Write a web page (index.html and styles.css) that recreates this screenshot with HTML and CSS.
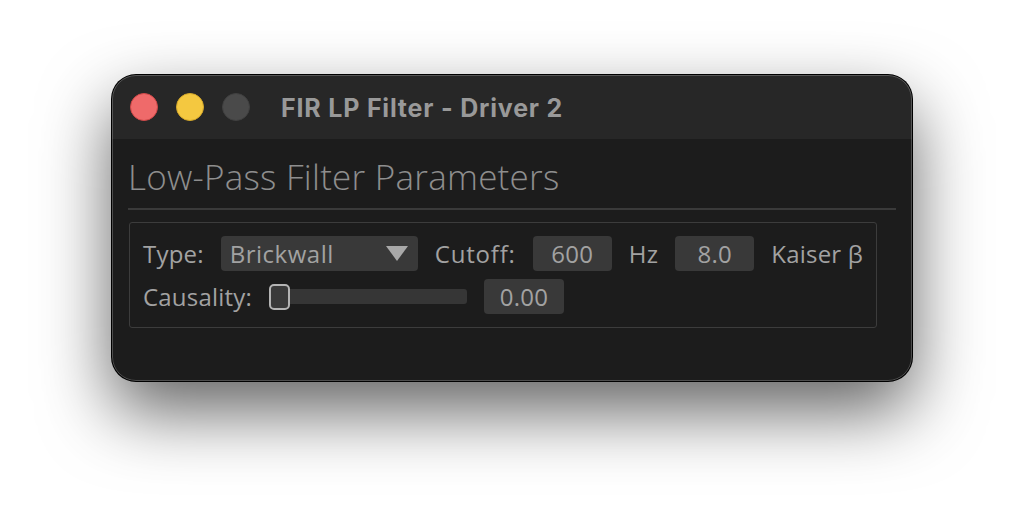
FILE: index.html
```html
<!DOCTYPE html>
<html>
<head>
<meta charset="utf-8">
<link rel="stylesheet" href="styles.css">
</head>
<body>
<div class="window">
  <div class="titlebar">
    <div class="lights">
      <span class="light red"></span>
      <span class="light yellow"></span>
      <span class="light gray"></span>
    </div>
    <div class="title">FIR LP Filter - Driver 2</div>
  </div>
  <div class="content">
    <h1 class="heading">Low-Pass Filter Parameters</h1>
    <div class="sep"></div>
    <div class="group">
      <div class="row">
        <span class="label">Type:</span>
        <div class="combo"><span>Brickwall</span><span class="arrow"></span></div>
        <span class="label cutoff">Cutoff:</span>
        <div class="field">600</div>
        <span class="label">Hz</span>
        <div class="field">8.0</div>
        <span class="label">Kaiser β</span>
      </div>
      <div class="row">
        <span class="label">Causality:</span>
        <div class="slider"><span class="thumb"></span></div>
        <div class="field">0.00</div>
      </div>
    </div>
  </div>
</div>
</body>
</html>
```
FILE: styles.css
```css
html, body {
  margin: 0;
  padding: 0;
  background: #ffffff;
}
body {
  width: 1024px;
  height: 528px;
  overflow: hidden;
  padding: 75px 0 0 112px;
  box-sizing: border-box;
}
.window {
  position: relative;
  width: 800px;
  height: 306px;
  border-radius: 24px;
  background: #1c1c1c;
  overflow: hidden;
  box-shadow: 0 30px 70px rgba(0,0,0,0.62), 0 0 0 1px #000;
}
.window::after {
  content: "";
  position: absolute;
  inset: 0;
  border-radius: 24px;
  border: 1px solid rgba(255,255,255,0.22);
  pointer-events: none;
}
.titlebar {
  height: 64px;
  background: #272727;
  display: flex;
  align-items: center;
  padding-left: 18px;
}
.lights {
  display: flex;
  gap: 18px;
}
.light {
  width: 28px;
  height: 28px;
  border-radius: 50%;
  box-sizing: border-box;
}
.red { background: #ef6a6a; border: 1px solid #d04848; }
.yellow { background: #f4c840; border: 1px solid #d6a92a; }
.gray { background: #4a4a4a; border: 1px solid #404040; }
.title {
  margin-left: 31px;
  padding-top: 2px;
  font-family: Inter, "Liberation Sans", sans-serif;
  font-weight: 700;
  font-size: 25px;
  color: #999999;
  letter-spacing: 0.8px;
}
.content {
  padding: 0 16px;
  font-family: "Open Sans", "Noto Sans", sans-serif;
}
.heading {
  margin: 0;
  padding-top: 15px;
  font-weight: 300;
  font-size: 35px;
  line-height: 46px;
  color: #8e8e8e;
  letter-spacing: 0.25px;
}
.sep {
  margin-top: 8px;
  height: 2px;
  background: #3a3a3a;
}
.group {
  margin-top: 12px;
  margin-left: 1px;
  width: 748px;
  height: 106px;
  box-sizing: border-box;
  border: 1px solid #3c3c3c;
  border-radius: 3px;
  padding: 13px 13px;
  display: flex;
  flex-direction: column;
  gap: 8px;
}
.row {
  display: flex;
  align-items: center;
  gap: 17px;
  font-size: 24px;
  color: #a2a2a2;
  height: 35px;
}
.label {
  white-space: nowrap;
  letter-spacing: 0.2px;
}
.label.cutoff {
  letter-spacing: 0.8px;
}
.combo {
  width: 199px;
  height: 35px;
  box-sizing: border-box;
  background: #393939;
  border-radius: 4px;
  display: flex;
  align-items: center;
  justify-content: space-between;
  padding: 0 10px 0 9px;
  letter-spacing: 0.5px;
}
.arrow {
  width: 0;
  height: 0;
  border-left: 11px solid transparent;
  border-right: 11px solid transparent;
  border-top: 15px solid #a8a8a8;
}
.field {
  width: 80px;
  height: 35px;
  box-sizing: border-box;
  background: #393939;
  border-radius: 4px;
  display: flex;
  align-items: center;
  justify-content: center;
  letter-spacing: 0.2px;
}
.slider {
  position: relative;
  width: 198px;
  height: 15px;
  background: #363636;
  border-radius: 3px;
}
.thumb {
  position: absolute;
  left: 0;
  top: -5px;
  width: 21px;
  height: 26px;
  box-sizing: border-box;
  border: 2px solid #b4b4b4;
  border-radius: 5px;
  background: #3a3a3a;
}
```
